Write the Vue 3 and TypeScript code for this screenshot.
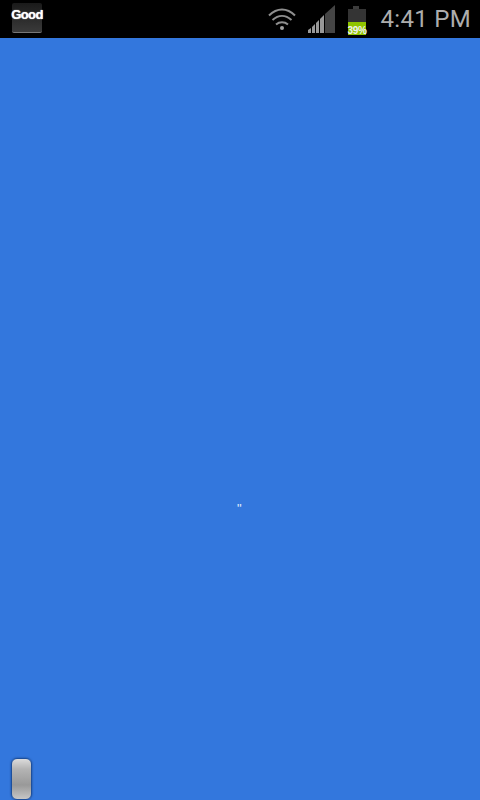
<script setup lang="ts">
const wifiArcs: string[] = [
  'M269 15.5C277 7.5 287 7.5 295 15.5',
  'M272.5 20C278.5 14.5 285.5 14.5 291.5 20',
  'M276 24.5C279.5 21.5 284.5 21.5 288 24.5',
]
const signalBars: string[] = [
  'M308 33v-3l3-2v5z',
  'M312 33v-6l3-3v9z',
  'M316 33v-10l3-3v13z',
  'M320 33v-14l4-4v18z',
]
</script>

<template>
  <div class="screen">
    <header class="status">
      <div class="app-icon"><span class="good">Good</span></div>
      <div class="tray">
        <svg class="icons" width="110" height="38" viewBox="260 0 110 38">
          <path v-for="d in wifiArcs" :key="d" :d="d" fill="none" stroke="#8f8f8f" stroke-width="2" />
          <circle cx="282" cy="28" r="2" fill="#a0a0a0" />
          <path v-for="d in signalBars" :key="d" :d="d" fill="#989898" />
          <path d="M325 33V14l10-9v28z" fill="#454545" />
          <rect x="353" y="6" width="6" height="3" fill="#3c3c3c" />
          <rect x="348" y="9" width="18" height="13" fill="#343434" />
          <rect x="348" y="22" width="18" height="13" fill="#8fc400" />
        </svg>
        <span class="battery">39%</span>
        <span class="time">4:41 PM</span>
      </div>
    </header>
    <main class="content">
      <span class="mark">"</span>
    </main>
    <div class="handle"></div>
  </div>
</template>

<style scoped>
.screen {
  position: relative;
  width: 480px;
  height: 800px;
  display: flex;
  flex-direction: column;
  background: #3377dd;
  overflow: hidden;
  font-family: "Roboto", "Liberation Sans", sans-serif;
}
.status {
  height: 38px;
  flex: none;
  background: #000;
  display: flex;
  align-items: center;
  justify-content: space-between;
  padding-left: 12px;
  box-sizing: border-box;
}
.app-icon {
  width: 30px;
  height: 30px;
  margin-top: 1px;
  margin-bottom: 3px;
  border-radius: 2px;
  border-bottom: 1px solid #777;
  box-sizing: border-box;
  background: linear-gradient(#1a1a1a, #3a3a3a);
  display: flex;
  justify-content: center;
}
.good {
  font-family: "Liberation Sans", sans-serif;
  font-size: 13px;
  font-weight: 700;
  letter-spacing: -0.6px;
  line-height: 13px;
  margin-top: 5px;
  color: #fff;
  text-shadow: 0 0 1px #fff;
}
.tray {
  position: relative;
  width: 220px;
  height: 38px;
  display: flex;
  justify-content: flex-end;
  align-items: center;
}
.icons {
  position: absolute;
  left: 0;
  top: 0;
}
.battery {
  position: absolute;
  left: 87px;
  top: 25px;
  width: 20px;
  text-align: center;
  font-family: "Liberation Sans", sans-serif;
  font-size: 10px;
  font-weight: 700;
  line-height: 11px;
  letter-spacing: -0.3px;
  color: #f0f0f0;
}
.time {
  font-size: 24px;
  line-height: 38px;
  color: #adadad;
  margin-right: 9px;
  letter-spacing: 0.3px;
}
.content {
  flex: 1;
  position: relative;
}
.mark {
  position: absolute;
  left: 237px;
  top: 464px;
  font-family: "Liberation Sans", sans-serif;
  font-size: 13px;
  line-height: 13px;
  color: #e4edfa;
}
.handle {
  position: absolute;
  left: 11px;
  top: 758px;
  width: 21px;
  height: 42px;
  box-sizing: border-box;
  border-radius: 6px;
  border: 1px solid #1d4f9c;
  box-shadow: 0 0 2px #17407f;
  background: linear-gradient(#dcdcdc, #b4b4b4 25%, #999 65%, #c6c6c6);
}
</style>
